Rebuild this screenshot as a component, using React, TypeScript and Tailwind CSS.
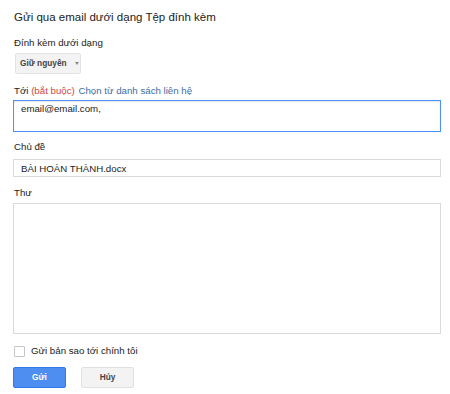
import { useState } from "react";

function App() {
  const [to, setTo] = useState("email@email.com,");
  const [subject, setSubject] = useState("BÀI HOÀN THÀNH.docx");
  const [body, setBody] = useState("");
  const [copy, setCopy] = useState(false);

  return (
    <div className="min-h-screen w-[450px] bg-white px-[13px] pt-[7px] font-['Liberation_Sans',Arial,sans-serif] text-[#222]">
      <h1 className="pl-px text-[11.5px] leading-[20px] text-[#222]">
        Gửi qua email dưới dạng Tệp đính kèm
      </h1>

      <p className="mt-[8px] pl-px text-[9.7px] leading-[16px]">Đính kèm dưới dạng</p>
      <button className="ml-[2px] mt-[2px] flex h-[21px] w-[66px] items-center gap-[8px] whitespace-nowrap rounded-[2px] border border-[#e3e3e3] bg-[#f3f3f3] pl-[4px] text-[8.3px] font-bold text-[#444]">
        Giữ nguyên
        <span className="h-0 w-0 border-x-[2.5px] border-t-[3px] border-x-transparent border-t-[#888]" />
      </button>

      <p className="mt-[9px] pl-px text-[9.7px] leading-[16px]">
        Tới <span className="text-[#d14836]">(bắt buộc)</span>{" "}
        <span className="ml-px cursor-pointer text-[#3b6ea8]">
          Chọn từ danh sách liên hệ
        </span>
      </p>
      <textarea
        value={to}
        onChange={(e) => setTo(e.target.value)}
        className="mt-[1px] block h-[32px] w-[428px] resize-none border border-[#4d90fe] px-[7px] pt-[1px] text-[9.7px] leading-[14px] text-[#222] shadow-[inset_0_1px_2px_rgba(0,0,0,0.1)] outline-none"
      />

      <p className="mt-[7px] pl-px text-[9.7px] leading-[16px]">Chủ đề</p>
      <input
        value={subject}
        onChange={(e) => setSubject(e.target.value)}
        className="mt-[4px] block h-[18px] w-[428px] border border-[#d9d9d9] px-[7px] text-[9.7px] leading-[16px] text-[#222] outline-none"
      />

      <p className="mt-[8px] pl-px text-[9.7px] leading-[16px]">Thư</p>
      <textarea
        value={body}
        onChange={(e) => setBody(e.target.value)}
        className="mt-[2px] block h-[131px] w-[428px] resize-none border border-[#d9d9d9] p-[6px] text-[9.7px] outline-none"
      />

      <label className="mt-[9px] flex h-[16px] items-center gap-[6px] text-[9.7px]">
        <input
          type="checkbox"
          checked={copy}
          onChange={(e) => setCopy(e.target.checked)}
          className="ml-px h-[11px] w-[11px] appearance-none rounded-[1px] border border-[#c6c6c6] bg-white"
        />
        Gửi bản sao tới chính tôi
      </label>

      <div className="mt-[8px] flex gap-[15px]">
        <button className="h-[21px] w-[53px] rounded-[2px] border border-[#3079ed] bg-[#4d8ef0] text-[8.3px] font-bold text-white">
          Gửi
        </button>
        <button className="h-[21px] w-[53px] rounded-[2px] border border-[#e0e0e0] bg-[#f3f3f3] text-[8.3px] font-bold text-[#444]">
          Hủy
        </button>
      </div>
    </div>
  );
}

export default App;
